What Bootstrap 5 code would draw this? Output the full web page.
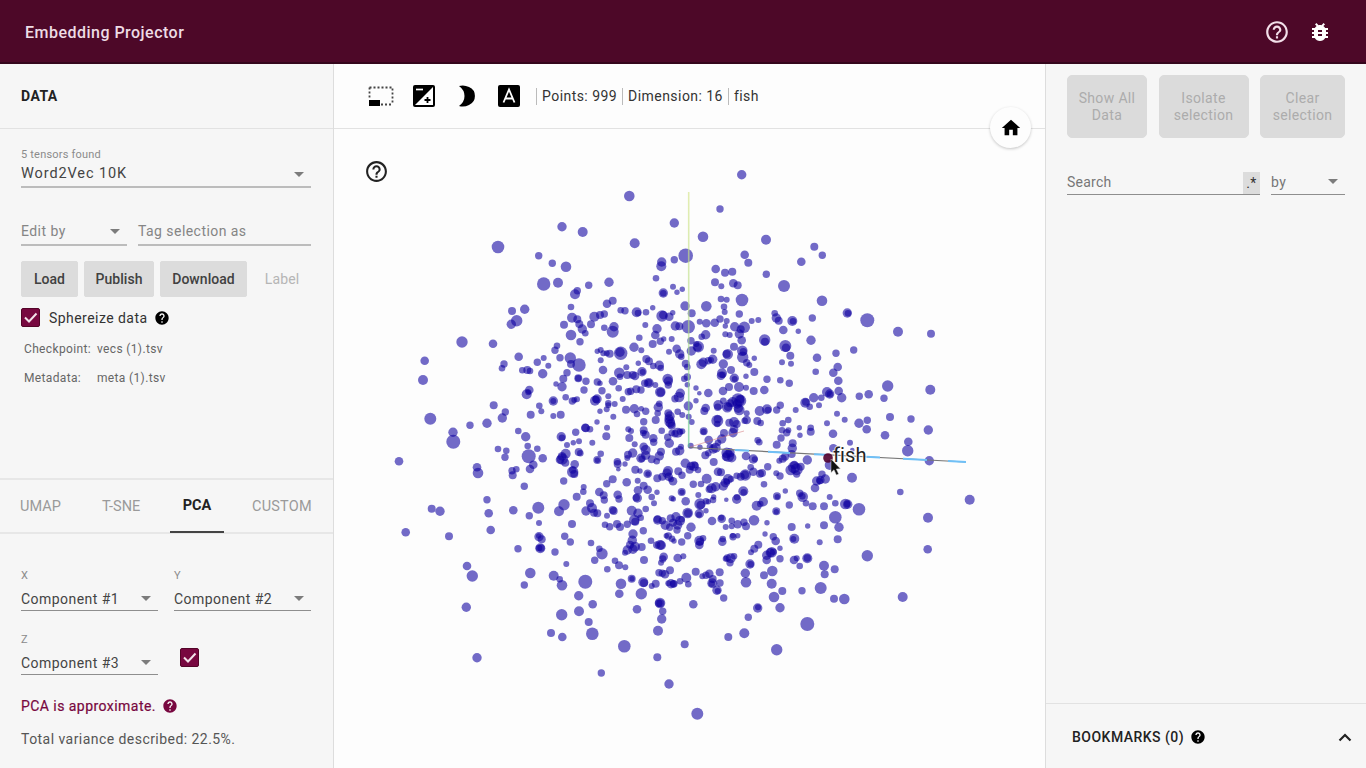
<!DOCTYPE html>
<html lang="en">
<head>
<meta charset="utf-8">
<meta name="viewport" content="width=device-width, initial-scale=1">
<title>Embedding Projector</title>
<link href="https://cdn.jsdelivr.net/npm/bootstrap@5.3.0/dist/css/bootstrap.min.css" rel="stylesheet">
<style>
body{font-family:Roboto,"Liberation Sans",sans-serif;font-size:14px;line-height:18px;letter-spacing:.45px;color:#444;background:#fdfdfd}
svg{display:block;flex:none}
.topbar{height:64px;background:#4d0828;color:#eedce5;padding:2px 34px 0 25px;border-bottom:2px solid #35061c}
.topbar h1{font-size:16px;font-weight:500;letter-spacing:.48px;line-height:20px;padding-top:1px}
.side{background:#f6f6f6}
.side-left{width:334px;border-right:1px solid #ddd}
.side-right{width:321px;border-left:1px solid #ddd}
.head{height:65px;border-bottom:1px solid #e2e2e2}
.head-title{font-weight:700;color:#222;padding:0 21px 0;font-size:14px}
.tiny{font-size:11px;line-height:14px;color:#8b8b8b;letter-spacing:.2px}
.pick{height:28px;border-bottom:2px solid #bcbcbc;padding-right:7px}
.pick.thin{border-bottom:1px solid #8e8e8e}
.muted{color:#858585}
.caret{border:5px solid transparent;border-top-color:#7c7c7c;border-bottom:0;width:0}
.act{--bs-btn-bg:#dcdcdc;--bs-btn-color:#414141;--bs-btn-border-color:#dcdcdc;--bs-btn-font-size:14px;--bs-btn-font-weight:500;--bs-btn-line-height:18px;--bs-btn-border-radius:2px;--bs-btn-padding-x:0;height:36px;letter-spacing:.05px}
.box{width:19px;height:19px;background:#780840;border:1px solid #540529;border-radius:2px}
.files{font-size:12px;color:#666;letter-spacing:.35px}
.proj{height:290px;border-top:2px solid #e7e7e7}
.tabs{height:54px;border-bottom:2px solid #e7e7e7;font-size:14.5px;color:#9a9a9a;letter-spacing:0;padding:0 0 0 20px}
.tabs span{padding-top:2px}
.tabs .on{color:#222;font-weight:700;width:54px;height:54px;border-bottom:2px solid #444}
.wine{color:#780840}
.sel{--bs-btn-disabled-bg:#dbdbdb;--bs-btn-disabled-color:#acacac;--bs-btn-disabled-border-color:#dbdbdb;--bs-btn-disabled-opacity:1;--bs-btn-font-size:14px;--bs-btn-line-height:17px;--bs-btn-border-radius:5px;--bs-btn-padding-x:0;height:63px;letter-spacing:.35px}
.tools{padding:0 34px;color:#333}
.sep{width:1px;height:17px;background:#bbb}
.home{top:107px;left:990px;width:41px;height:41px;background:#fdfdfd;box-shadow:0 1px 3px rgba(0,0,0,.22)}
.guide{top:159px;left:364px}
.regex{width:17px;height:22px;background:#dcdcdc;color:#333;line-height:22px}
.marks{height:65px;border-top:1px solid #e2e2e2;padding:1px 14px 0 26px;color:#222;font-weight:500;letter-spacing:.48px}
#plot circle{fill:#0d00a0;fill-opacity:.58}
.fishname{font:20px Roboto,sans-serif;letter-spacing:.1px;fill:#222;stroke:#fff;stroke-opacity:.75;stroke-width:2px;paint-order:stroke}
</style>
</head>
<body class="vh-100 overflow-hidden d-flex flex-column position-relative">
<svg class="d-none">
  <symbol id="help-o" viewBox="0 0 24 24"><path d="M11 18h2v-2h-2v2zm1-16C6.48 2 2 6.48 2 12s4.480 10 10 10 10-4.480 10-10S17.520 2 12 2zm0 18c-4.410 0-8-3.590-8-8s3.590-8 8-8 8 3.590 8 8-3.590 8-8 8zm0-14c-2.210 0-4 1.790-4 4h2c0-1.100.9-2 2-2s2 .9 2 2c0 2-3 1.750-3 5h2c0-2.250 3-2.500 3-5 0-2.210-1.790-4-4-4z"/></symbol>
  <symbol id="help-f" viewBox="0 0 24 24"><path d="M12 2C6.480 2 2 6.480 2 12s4.480 10 10 10 10-4.480 10-10S17.520 2 12 2zm1 17h-2v-2h2v2zm2.070-7.750l-.9.920C13.450 12.900 13 13.500 13 15h-2v-.5c0-1.100.45-2.100 1.170-2.830l1.240-1.260c.37-.36.590-.86.590-1.410 0-1.100-.9-2-2-2s-2 .9-2 2H8c0-2.210 1.790-4 4-4s4 1.790 4 4c0 .88-.36 1.680-.93 2.250z"/></symbol>
  <symbol id="tick" viewBox="0 0 17 17"><path d="M3 8.500l4 4 7.500-8" fill="none" stroke="#f3e3ea" stroke-width="2"/></symbol>
</svg>

<header class="topbar d-flex align-items-center justify-content-between flex-shrink-0">
  <h1 class="m-0">Embedding Projector</h1>
  <div class="d-flex gap-3 align-items-center">
    <svg width="26" height="26" fill="#f3dfe9"><use href="#help-o"/></svg>
    <svg width="24" height="24" viewBox="0 0 24 24" fill="#fff" style="margin-left:2px"><path d="M20 8h-2.810c-.45-.78-1.070-1.450-1.820-1.960L17 4.410 15.590 3l-2.170 2.170C12.960 5.060 12.490 5 12 5s-.96.060-1.410.17L8.410 3 7 4.410l1.620 1.630C7.880 6.550 7.260 7.220 6.810 8H4v2h2.090c-.05.33-.09.66-.09 1v1H4v2h2v1c0 .34.040.67.090 1H4v2h2.810c1.040 1.790 2.970 3 5.190 3s4.150-1.210 5.190-3H20v-2h-2.090c.05-.33.090-.66.090-1v-1h2v-2h-2v-1c0-.34-.04-.67-.09-1H20V8zm-6 8h-4v-2h4v2zm0-4h-4v-2h4v2z"/></svg>
  </div>
</header>

<div class="d-flex flex-grow-1">
  <aside class="side side-left d-flex flex-column flex-shrink-0">
    <div class="head head-title d-flex align-items-center">DATA</div>
    <div class="flex-grow-1" style="padding:19px 22px 0 21px">
      <div class="tiny">5 tensors found</div>
      <div class="pick d-flex align-items-center justify-content-between" style="height:26px"><span style="font-size:14.5px;letter-spacing:.9px">Word2Vec 10K</span><span class="caret"></span></div>
      <div class="d-flex" style="margin-top:30px;gap:11px">
        <div class="pick muted d-flex align-items-center justify-content-between" style="width:106px"><span>Edit by</span><span class="caret"></span></div>
        <div class="pick muted d-flex align-items-center flex-grow-1 pe-0">Tag selection as</div>
      </div>
      <div class="d-flex align-items-center" style="margin-top:15px;gap:6px">
        <button class="btn act" style="width:57px">Load</button>
        <button class="btn act" style="width:70px">Publish</button>
        <button class="btn act" style="width:87px">Download</button>
        <span class="flex-grow-1 text-center" style="color:#b5b5b5;letter-spacing:.15px">Label</span>
      </div>
      <div class="d-flex align-items-center" style="margin-top:11px">
        <span class="box"><svg width="17" height="17"><use href="#tick"/></svg></span>
        <span style="margin-left:9px;color:#333">Sphereize data</span>
        <svg width="16" height="16" style="margin-left:6px"><use href="#help-f"/></svg>
      </div>
      <div class="files d-flex" style="margin:13px 0 0 3px"><span style="width:73px">Checkpoint:</span><span>vecs (1).tsv</span></div>
      <div class="files d-flex" style="margin:11px 0 0 3px"><span style="width:73px">Metadata:</span><span>meta (1).tsv</span></div>
    </div>
    <div class="proj">
      <div class="tabs d-flex align-items-center">
        <span style="width:82px">UMAP</span><span style="width:68px">T-SNE</span><span class="on d-flex align-items-center justify-content-center">PCA</span><span style="margin-left:28px;letter-spacing:.2px">CUSTOM</span>
      </div>
      <div style="padding:35px 22px 0 21px">
        <div class="d-flex" style="gap:16px">
          <div style="width:137px"><div class="tiny">X</div><div class="pick thin d-flex align-items-center justify-content-between pt-1"><span>Component #1</span><span class="caret"></span></div></div>
          <div style="width:137px"><div class="tiny">Y</div><div class="pick thin d-flex align-items-center justify-content-between pt-1"><span>Component #2</span><span class="caret"></span></div></div>
        </div>
        <div class="d-flex" style="gap:22px;margin-top:22px">
          <div style="width:137px"><div class="tiny">Z</div><div class="pick thin d-flex align-items-center justify-content-between pt-1"><span>Component #3</span><span class="caret"></span></div></div>
          <span class="box" style="margin-top:15px"><svg width="17" height="17"><use href="#tick"/></svg></span>
        </div>
        <div class="wine d-flex align-items-center" style="margin-top:22px"><span style="-webkit-text-stroke:.2px">PCA is approximate.</span><svg width="16" height="16" fill="#780840" style="margin-left:6px"><use href="#help-f"/></svg></div>
        <div style="margin-top:15px;color:#555">Total variance described: 22.5%.</div>
      </div>
    </div>
  </aside>

  <main class="flex-grow-1 d-flex flex-column" style="min-width:0">
    <div class="head tools d-flex align-items-center flex-shrink-0">
      <svg width="26" height="24" viewBox="0 0 26 24"><path d="M1.500 3.500h23v17M1.500 3.500v11M13 20.500h12" fill="none" stroke="#444" stroke-width="1.800" stroke-dasharray="2 2"/><path d="M1 16h11v6H1z"/></svg>
      <svg width="22" height="22" viewBox="0 0 22 22" style="margin-left:19px"><rect width="22" height="22" rx="2"/><path d="M20 2v18H2z" fill="#fff"/><path d="M3 4.500h7" stroke="#fff" stroke-width="1.700"/><path d="M11.500 15h6m-3-3v6" stroke="#000" stroke-width="1.800"/></svg>
      <svg width="17" height="22" viewBox="0 0 17 22" style="margin-left:23px"><path d="M1 1q5-1.500 10 1a9.800 9.800 0 0 1 0 18Q6 22.500 1 21q5.500-4 5.500-10T1 1z"/></svg>
      <svg width="22" height="22" viewBox="0 0 22 22" style="margin-left:23px"><rect width="22" height="22" rx="2"/><path d="M5.500 17.500L11 4.500l5.500 13M7.500 13.500h7" fill="none" stroke="#fff" stroke-width="1.800"/></svg>
      <span class="sep" style="margin-left:16px"></span><span style="margin-left:5px">Points: 999</span>
      <span class="sep" style="margin-left:5px"></span><span style="margin-left:5px">Dimension: 16</span>
      <span class="sep" style="margin-left:5px"></span><span style="margin-left:5px">fish</span>
    </div>
    <svg id="plot" width="711" height="639" viewBox="334 129 711 639">
      <defs><linearGradient id="axisY" x1="0" y1="193" x2="0" y2="447" gradientUnits="userSpaceOnUse"><stop stop-color="#d5e589"/><stop offset=".55" stop-color="#b3dc8a"/><stop offset="1" stop-color="#5fc98f"/></linearGradient></defs>
      <g id="dots"></g>
      <path d="M688.700 192V447" stroke="url(#axisY)" stroke-width="1.600" stroke-opacity=".65"/>
      <path d="M690 447l26-8 28-8" stroke="#cf6b70" stroke-opacity=".5" fill="none"/>
      <path d="M689 447.500L966 462" stroke="#777" stroke-width="1.200"/>
      <path d="M735 450l14 .7M768 451.800l22 1.100M814 454.200l12 .6M866 456.800l14 .8M903 458.700l24 1.200M948 461l18 1" stroke="#6fc0f7" stroke-width="2"/>
      <circle cx="828" cy="458" r="4.800" style="fill:#50002e;fill-opacity:.9"/>
      <text class="fishname" x="833" y="462">fish</text>
      <path d="M831 459v13.500l3-2.700 2.400 5.200 2.200-1-2.300-5 4 -.3z" fill="#111" stroke="#ccc" stroke-width=".5"/>
    </svg>
  </main>

  <aside class="side side-right d-flex flex-column flex-shrink-0">
    <div class="flex-grow-1" style="padding:11px 21px 0">
      <div class="d-flex justify-content-between">
        <button class="btn sel" disabled style="width:80px">Show All<br>Data</button>
        <button class="btn sel" disabled style="width:90px">Isolate<br>selection</button>
        <button class="btn sel" disabled style="width:85px">Clear<br>selection</button>
      </div>
      <div class="d-flex" style="gap:11px;margin-top:31px;color:#777">
        <div class="pick thin d-flex align-items-center justify-content-between pe-0" style="width:193px;height:26px"><span style="letter-spacing:.25px">Search</span><span class="regex text-center" style="margin-top:3px">.*</span></div>
        <div class="pick thin d-flex align-items-center justify-content-between flex-grow-1" style="height:26px"><span>by</span><span class="caret"></span></div>
      </div>
    </div>
    <div class="marks d-flex align-items-center"><span>BOOKMARKS (0)</span><svg width="16" height="16" style="margin-left:6px"><use href="#help-f"/></svg>
      <svg class="ms-auto" width="14" height="12" viewBox="0 0 14 12"><path d="M1.500 9.500L7 4l5.500 5.500" fill="none" stroke="#222" stroke-width="2.200"/></svg></div>
  </aside>
</div>
<div class="home rounded-circle position-absolute d-flex align-items-center justify-content-center"><svg width="22" height="22" viewBox="0 0 24 24"><path d="M10 20v-6h4v6h5v-8h3L12 3 2 12h3v8z"/></svg></div>
<svg class="guide position-absolute" width="25" height="25" fill="#222"><use href="#help-o"/></svg>

<script>
// Projected points, grouped by tile: origin of the tile in page units,
// then "x y r" triples in thirds of a unit.
const tiles = [
 {x:390,y:160,p:`718 108 16,516 200 14,578 216 15,324 261 19,446 287 11,487 310 11,528 320 16,461 372 20,504 368 15,657 367 14,596 376 11,562 392 11,555 403 15,543 441 10,668 422 12,651 431 13,692 451 10,705 452 11,366 453 12,404 448 14,380 482 17,364 493 14,546 473 15,562 478 12,522 494 12,568 492 12,577 507 14,586 520 10,543 525 16,613 470 15,630 465 12,643 462 11,603 493 12,643 503 10,668 515 18,672 500 14,570 545 11,216 546 17,309 551 13,104 602 13,99 660 15,501 557 10,495 571 11,386 590 13,342 612 11,336 625 10,461 594 9,442 607 11,475 617 9,510 593 11,541 594 17,567 615 20,543 612 12,397 631 10,412 630 12,420 633 10,458 641 14,531 638 11,520 656 12,516 680 14,498 672 8,565 655 12,565 655 10,588 664 11,582 690 11,622 574 8,632 570 9,640 580 9,659 581 12,650 580 9,692 580 20,690 577 14,632 601 9,639 630 13,688 638 16,709 622 9,712 645 12,690 650 10,669 664 13,622 666 11,630 670 8,686 685 10,636 692 11,418 690 13,410 703 15,415 697 9,311 736 12,346 756 11,337 774 14,291 790 14,240 796 11,121 776 18,189 817 14,448 737 10,454 754 9,422 764 12,490 723 14,490 723 9,527 712 10,547 723 11,553 720 9,561 718 9,512 764 12,490 768 9,615 722 15,621 717 14,618 718 11,655 709 9,655 730 10,655 736 9,674 732 9,698 717 9,715 695 11,630 754 8,650 748 9,708 749 12,670 770 9,621 786 8,586 803 13,587 804 13,600 808 10,651 803 9,557 817 11,385 813 10,715 808 9`},
 {x:600,y:160,p:`425 44 14,360 147 11,223 189 14,309 230 16,104 250 15,498 239 15,257 287 22,223 299 11,185 306 14,184 319 15,168 355 10,434 284 13,445 308 12,347 327 13,375 338 12,397 335 12,345 367 12,364 379 9,400 370 13,413 376 12,499 343 11,552 378 18,219 380 9,231 397 8,247 388 8,190 399 14,190 400 10,426 420 19,363 417 10,380 419 9,372 440 10,374 456 9,255 438 14,319 439 16,275 460 12,418 462 11,110 457 15,114 459 10,138 457 10,158 443 8,186 468 17,190 465 13,208 470 13,218 458 8,136 495 9,171 506 14,166 525 13,118 533 10,158 552 12,181 544 11,215 537 9,191 537 8,226 498 14,238 499 12,265 500 20,299 485 9,319 490 13,344 488 13,360 477 11,380 483 9,376 498 8,404 500 14,433 502 17,422 508 12,455 483 9,475 480 9,524 460 10,529 474 14,536 482 12,577 483 15,579 484 10,550 510 13,595 514 8,317 524 14,305 530 10,273 542 11,295 560 17,293 562 13,274 573 14,289 552 9,376 523 9,389 525 9,418 522 14,425 541 13,402 560 12,427 572 16,383 583 16,380 582 12,428 592 17,430 575 11,440 608 11,463 595 8,463 636 12,448 615 9,494 540 17,495 545 12,556 558 18,558 563 13,571 587 12,546 607 9,573 611 9,102 562 14,124 571 9,139 597 12,147 604 12,115 610 8,207 575 9,230 566 13,239 582 14,244 590 10,178 616 14,182 624 10,160 618 10,126 635 14,128 636 9,98 645 12,85 645 12,257 611 12,262 621 10,262 651 11,253 656 10,310 607 14,304 613 15,325 602 11,338 598 14,341 572 9,333 600 9,370 612 14,366 640 15,363 647 13,368 644 10,393 630 12,403 655 14,404 657 9,438 649 8,501 658 11,541 661 10,568 670 11,105 648 13,146 669 15,146 668 11,134 670 11,203 657 16,205 664 14,205 675 11,181 696 16,182 697 13,166 675 9,92 694 11,109 688 12,123 690 11,262 674 8,288 684 8,298 700 7,325 699 13,369 693 13,387 681 12,417 681 15,438 683 9,461 693 12,493 690 13,241 700 14,237 711 16,225 716 11,178 731 10,175 742 14,265 738 14,288 722 8,317 744 13,313 753 12,355 735 15,353 742 11,382 742 16,384 740 13,398 726 15,414 720 20,421 722 18,418 750 16,415 745 14,412 732 14,370 722 10,390 730 12,421 718 12,479 753 15,501 748 15,504 750 10,530 750 11,541 736 11,587 750 9,103 746 14,124 746 8,111 762 10,137 754 11,205 760 12,209 769 15,209 785 16,212 791 14,207 777 14,215 797 12,233 755 10,173 760 10,167 780 12,131 785 11,131 811 12,266 770 9,275 786 9,247 765 9,352 782 18,353 778 12,352 792 10,388 788 12,402 786 15,410 792 12,440 760 9,440 780 13,434 782 10,472 783 12,482 789 10,565 780 10,548 790 10,546 811 10,565 811 9,86 808 8,185 812 10,311 814 12,311 815 9,240 815 10,215 819 10,402 808 13,372 819 12,598 803 8`},
 {x:780,y:160,p:`103 260 12,127 286 11,64 305 13,15 378 17,126 422 16,202 459 14,204 460 10,262 481 21,354 515 15,453 521 12,97 474 11,38 484 15,57 514 9,93 541 14,221 570 11,168 580 11,111 593 13,107 635 10,173 621 13,160 638 13,175 662 13,32 612 8,28 670 10,5 660 9,323 678 17,451 689 15,312 715 11,238 709 11,266 703 13,141 696 15,149 702 14,150 703 10,176 693 13,185 713 14,101 713 14,124 713 10,76 728 15,77 726 11,89 740 10,117 736 9,48 752 10,171 761 9,194 779 9,330 771 12,393 777 11,237 790 14,262 781 11,260 808 13,445 810 14,141 790 9,26 780 11,8 792 10,28 810 12,60 804 12,92 803 10,92 815 12,159 821 13,315 826 13,3 738 9,60 826 8`},
 {x:390,y:430,p:`190 35 21,188 8 14,27 94 13,407 20 14,385 4 9,413 48 10,442 56 10,416 79 21,458 85 13,324 57 10,349 62 10,345 82 11,430 104 13,420 117 13,261 112 13,264 129 16,366 122 11,379 118 10,368 136 12,403 169 11,291 209 11,296 250 13,302 300 13,125 236 12,150 244 14,47 307 13,177 319 12,370 241 13,445 233 18,418 257 11,447 279 9,384 356 11,231 408 13,247 438 17,229 532 14,261 683 14,421 429 16,403 465 11,522 224 17,507 244 15,560 200 12,580 185 10,581 171 9,521 153 11,546 282 12,447 320 14,455 328 12,446 318 8,451 355 15,453 354 11,447 354 10,495 366 11,524 319 11,541 336 11,529 402 9,491 437 15,516 466 16,509 448 10,586 455 21,566 497 14,567 544 15,608 523 13,515 554 17,596 576 12,607 611 19,483 609 12,517 621 13,634 729 11,703 649 19,514 20 14,516 23 10,531 45 9,550 38 8,567 34 9,607 38 9,557 8 11,586 0 13,649 19 12,527 71 15,517 87 17,510 89 13,526 98 12,516 79 13,566 66 12,571 70 10,554 103 13,548 126 17,548 120 11,553 132 12,622 90 12,622 91 8,632 71 10,682 95 11,683 102 12,685 118 7,705 102 8,714 74 12,668 148 12,650 161 11,710 157 13,628 186 13,641 196 12,643 210 11,683 194 13,687 207 11,588 243 14,600 220 12,606 234 15,612 248 12,622 250 12,668 240 12,671 243 12,651 257 9,645 284 10,659 290 11,681 282 12,690 291 12,712 283 11,603 339 10,636 371 17,628 356 10,614 391 11,652 418 10,675 392 10,687 406 12,706 412 9,712 360 14,693 461 16,688 491 13`},
 {x:600,y:430,p:`18 18 11,88 24 12,93 3 9,130 9 10,137 14 12,160 25 13,161 37 11,208 40 14,217 13 17,233 8 15,225 11 11,203 22 11,247 4 9,312 4 12,326 30 13,330 50 10,371 9 14,365 27 14,399 8 14,354 38 10,347 53 15,340 57 14,380 68 16,385 78 18,390 68 14,378 80 13,395 83 14,316 76 12,325 70 10,300 52 8,341 96 12,272 47 9,243 50 9,239 62 14,228 65 12,104 43 9,131 50 13,137 60 15,137 76 14,123 85 14,125 86 10,155 88 12,183 65 12,178 78 14,170 94 10,98 69 14,88 76 13,82 84 9,106 119 12,120 123 8,143 131 13,144 132 8,78 155 13,85 160 11,113 152 9,114 181 13,131 167 12,143 179 13,171 187 8,155 201 10,162 220 9,112 204 14,109 203 11,53 97 11,256 100 14,282 109 15,273 108 13,285 105 10,269 119 12,294 120 10,204 123 15,201 130 14,206 140 13,235 124 12,246 136 11,172 145 12,187 140 12,219 154 13,213 148 9,245 186 12,246 187 8,215 205 9,257 214 13,220 207 8,320 146 15,347 170 14,335 175 15,328 178 11,280 163 11,303 162 10,384 147 15,376 158 14,370 168 14,380 155 10,393 147 10,354 125 13,363 127 12,410 137 10,422 140 12,436 135 17,435 134 13,460 125 13,480 131 12,486 129 12,503 110 11,452 112 10,438 78 13,460 87 14,464 88 9,473 31 10,478 37 10,530 44 12,543 24 11,578 40 12,577 55 14,575 72 12,555 80 12,538 92 9,529 130 9,540 138 11,582 112 18,590 118 18,583 105 13,560 8 11,567 2 9,492 163 10,430 184 15,431 187 10,410 208 14,411 202 10,379 209 7,339 210 10,341 201 8,318 214 10,300 222 17,302 225 13,295 195 9,325 215 8,298 251 14,297 254 9,263 249 16,264 250 12,318 242 8,470 227 15,490 215 14,481 222 10,531 199 12,532 200 8,556 183 8,568 225 11,529 244 12,529 245 8,365 266 13,364 263 9,336 273 13,395 272 10,377 291 9,395 289 9,413 283 13,432 277 11,438 289 12,462 271 16,501 278 8,575 291 12,583 326 15,580 327 9,95 242 15,114 250 14,103 270 16,106 275 12,137 237 10,122 263 10,84 281 10,99 312 14,97 331 14,130 302 11,173 270 14,172 268 11,187 272 11,196 286 14,212 265 12,228 260 14,240 272 15,233 285 14,231 300 11,219 278 12,245 268 10,209 292 11,273 292 14,263 317 11,245 336 11,222 333 8,205 318 11,216 326 10,199 317 8,298 332 15,300 335 12,298 345 13,309 325 10,367 335 13,368 327 10,399 320 11,413 317 8,398 317 8,495 312 8,520 320 11,527 333 13,475 344 12,463 356 12,453 367 9,540 355 8,540 386 11,515 367 16,511 368 14,500 376 14,500 390 13,520 365 10,582 390 13,590 385 9,153 332 10,180 345 15,184 346 14,170 345 11,105 350 15,99 358 14,125 351 12,86 362 12,75 368 9,90 344 12,191 380 13,188 387 11,183 398 9,132 390 12,233 384 13,250 379 9,382 384 11,392 385 15,402 379 10,390 398 11,377 386 9,450 402 14,452 403 10,45 390 10,56 406 12,77 412 9,287 425 12,210 421 12,195 433 13,177 428 11,187 430 11,259 443 15,240 454 10,265 463 10,213 461 14,222 461 11,220 462 11,205 460 9,167 461 12,155 468 9,130 457 15,132 459 12,95 446 12,96 446 8,124 491 17,111 538 13,180 519 16,181 520 12,176 520 11,188 544 11,185 567 14,174 602 15,254 643 12,172 682 12,207 762 14,292 851 18,280 523 13,328 431 13,318 436 11,307 439 9,359 427 12,338 447 12,337 460 15,335 461 10,360 459 11,351 481 14,353 483 9,371 504 11,436 430 14,438 457 16,492 436 12,517 423 16,515 461 15,522 501 16,547 483 12,540 533 14,473 534 14,474 532 9,445 562 11,433 610 15,385 621 12,530 659 17`},
 {x:780,y:430,p:`260 0 12,445 0 14,159 12 13,91 8 12,315 16 13,60 17 8,28 2 10,3 24 11,38 37 12,39 50 12,32 70 13,385 35 13,383 62 17,210 38 9,217 60 7,82 90 14,8 86 12,448 92 14,160 55 13,149 105 15,216 143 15,126 133 11,136 147 14,121 150 13,110 153 14,119 153 10,105 174 13,46 104 19,42 113 18,32 120 16,52 120 14,50 132 11,3 140 9,62 110 12,361 186 10,569 209 15,16 183 9,29 225 12,59 190 11,68 200 16,67 199 10,78 220 10,98 229 12,132 229 12,149 201 9,166 220 10,196 222 16,203 223 14,202 222 10,237 238 19,166 262 19,177 292 14,132 286 12,83 288 8,35 291 12,444 263 15,443 358 13,41 327 14,45 326 12,119 337 9,173 328 12,46 384 11,40 391 13,59 408 10,82 385 15,82 384 11,262 377 17,132 407 15,134 433 12,164 418 12,122 474 18,66 482 11,8 483 12,2 532 13,162 506 12,193 507 16,368 501 15,82 582 21,2 387 9,2 356 7`}
];
const ns = "http://www.w3.org/2000/svg", dots = document.getElementById("dots"), placed = [];
tiles.forEach((t, i) => {
  for (const s of t.p.split(",")) {
    const [x, y, r] = s.split(" ").map(Number), px = t.x + x / 3, py = t.y + y / 3;
    // Neighbouring tiles share an edge strip; a point listed in both is drawn once.
    if (placed.some(q => q.i !== i && Math.hypot(q.px - px, q.py - py) < 2.2)) continue;
    placed.push({i, px, py});
    const c = document.createElementNS(ns, "circle");
    c.setAttribute("cx", px.toFixed(1));
    c.setAttribute("cy", py.toFixed(1));
    c.setAttribute("r", (r / 3).toFixed(1));
    dots.appendChild(c);
  }
});
</script>
<script src="https://cdn.jsdelivr.net/npm/bootstrap@5.3.0/dist/js/bootstrap.bundle.min.js"></script>
</body>
</html>
